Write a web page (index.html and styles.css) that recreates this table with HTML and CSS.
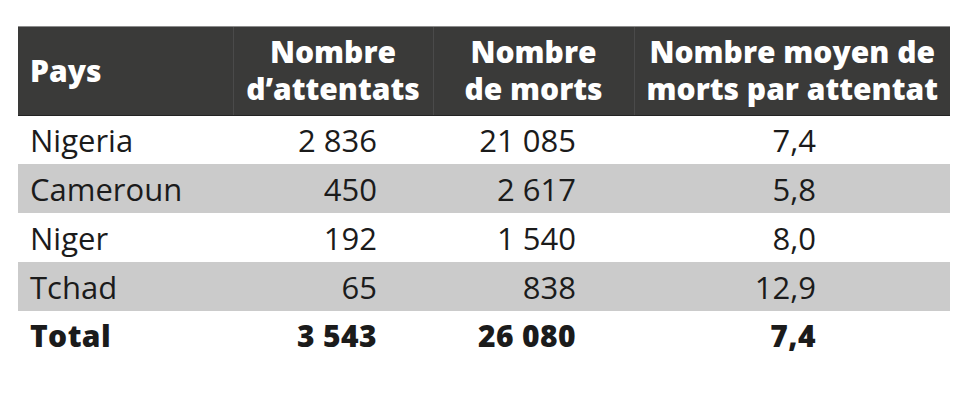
FILE: index.html
```html
<!DOCTYPE html>
<html lang="fr">
<head>
<meta charset="utf-8">
<title>Attentats</title>
<link rel="stylesheet" href="styles.css">
</head>
<body>
<table class="stats">
  <colgroup>
    <col class="c1"><col class="c2"><col class="c3"><col class="c4">
  </colgroup>
  <thead>
    <tr>
      <th class="left">Pays</th>
      <th>Nombre<br>d’attentats</th>
      <th>Nombre<br>de morts</th>
      <th>Nombre moyen de<br>morts par attentat</th>
    </tr>
  </thead>
  <tbody>
    <tr><td class="left">Nigeria</td><td class="n2">2 836</td><td class="n3">21 085</td><td class="n4">7,4</td></tr>
    <tr class="alt"><td class="left">Cameroun</td><td class="n2">450</td><td class="n3">2 617</td><td class="n4">5,8</td></tr>
    <tr><td class="left">Niger</td><td class="n2">192</td><td class="n3">1 540</td><td class="n4">8,0</td></tr>
    <tr class="alt"><td class="left">Tchad</td><td class="n2">65</td><td class="n3">838</td><td class="n4">12,9</td></tr>
    <tr class="total"><td class="left">Total</td><td class="n2">3 543</td><td class="n3">26 080</td><td class="n4">7,4</td></tr>
  </tbody>
</table>
</body>
</html>
```

FILE: styles.css
```css
html, body {
  margin: 0;
  background: #ffffff;
}
body {
  padding: 26px 0 0 18px;
  font-family: "Open Sans", Lato, sans-serif;
}
.stats {
  border-collapse: collapse;
  width: 932px;
  table-layout: fixed;
  color: #1b1b1b;
}
.c1 { width: 215px; }
.c2 { width: 200px; }
.c3 { width: 201px; }
.c4 { width: 316px; }
.stats thead tr {
  background: #3a3a39;
  height: 89px;
}
.stats th {
  color: #ffffff;
  font-weight: 800;
  font-size: 30px;
  line-height: 37px;
  text-align: center;
  vertical-align: middle;
  padding: 0 0 2px;
  border-top: 1px solid #8c8c8c;
  border-bottom: 1px solid #232323;
  border-left: 1px solid #4a4a4a;
}
.stats th.left {
  border-left: none;
}
.stats .left {
  text-align: left;
  padding-left: 12px;
}
.stats td {
  font-size: 31px;
  line-height: 36px;
  height: 49px;
  padding-top: 0;
  padding-bottom: 0;
  vertical-align: middle;
}
.stats tbody tr:first-child td {
  height: 48px;
}
.n2 { text-align: right; padding-right: 56px; }
.n3 { text-align: right; padding-right: 58px; }
.n4 { text-align: right; padding-right: 134px; }
.alt {
  background: #cbcbcb;
}
.total td {
  font-weight: 800;
  font-size: 30px;
  letter-spacing: 0.4px;
}
```
